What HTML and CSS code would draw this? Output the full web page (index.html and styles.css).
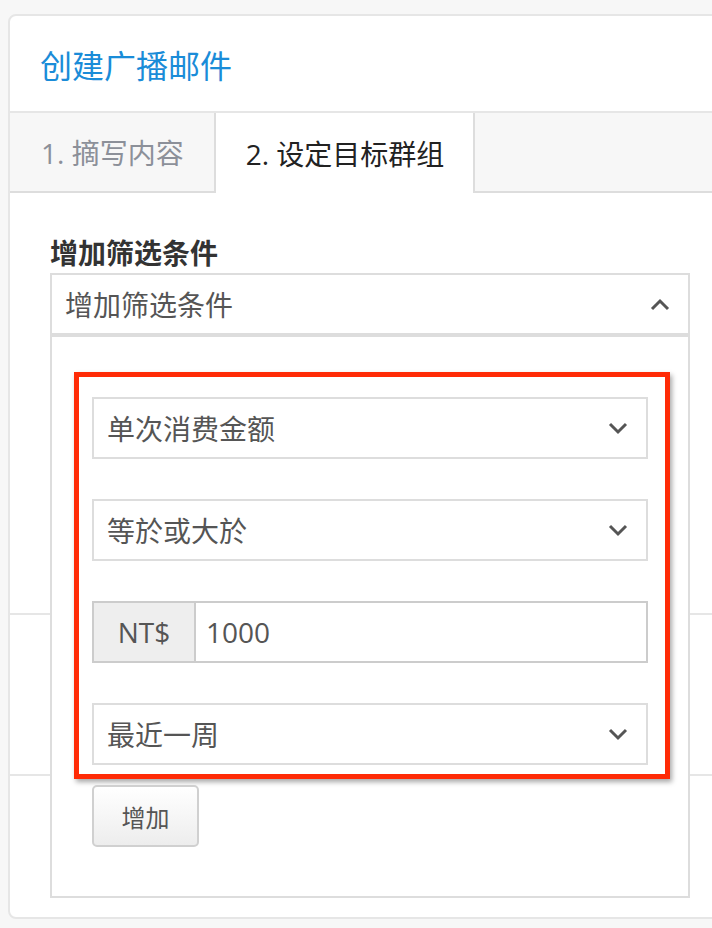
FILE: index.html
```html
<!DOCTYPE html>
<html>
<head>
  <meta charset="UTF-8">
  <link rel="stylesheet" href="styles.css">
</head>
<body>
  <div class="card">
    <div class="card-header">
      <div class="card-title">创建广播邮件</div>
    </div>

    <div class="tabs">
      <div class="tab">1. 摘写内容</div>
      <div class="tab active">2. 设定目标群组</div>
    </div>

    <div class="form-row row-filter">
      <div class="form-label">增加筛选条件</div>
      <div class="dropdown">
        <div class="dropdown-toggle">
          <span>增加筛选条件</span>
          <svg class="chevron" width="20" height="13" viewBox="0 0 20 13">
            <polyline points="2,11 10,3 18,11" fill="none" stroke="#555" stroke-width="3"/>
          </svg>
        </div>
        <div class="dropdown-menu">
          <div class="filter-box">
            <div class="select">
              <span>单次消费金额</span>
              <svg class="chevron" width="20" height="13" viewBox="0 0 20 13">
                <polyline points="2,2 10,10 18,2" fill="none" stroke="#555" stroke-width="3"/>
              </svg>
            </div>
            <div class="select">
              <span>等於或大於</span>
              <svg class="chevron" width="20" height="13" viewBox="0 0 20 13">
                <polyline points="2,2 10,10 18,2" fill="none" stroke="#555" stroke-width="3"/>
              </svg>
            </div>
            <div class="input-group">
              <span class="input-addon">NT$</span>
              <input type="text" class="input-field" value="1000">
            </div>
            <div class="select">
              <span>最近一周</span>
              <svg class="chevron" width="20" height="13" viewBox="0 0 20 13">
                <polyline points="2,2 10,10 18,2" fill="none" stroke="#555" stroke-width="3"/>
              </svg>
            </div>
          </div>
          <button class="button">增加</button>
        </div>
      </div>
    </div>

    <div class="form-row row-middle"></div>
    <div class="form-row row-last"></div>
  </div>
</body>
</html>
```

FILE: styles.css
```css
* {
  margin: 0;
  padding: 0;
  box-sizing: border-box;
}

body {
  overflow: hidden;
  font-family: 'Open Sans', 'Noto Sans CJK SC', sans-serif;
  background-color: #f7f7f7;
}

.card {
  width: 730px;
  margin: 14px 0 0 8px;
  background: white;
  border: 2px solid #e6e6e6;
  border-radius: 8px;
}

.card-header {
  display: flex;
  align-items: center;
  height: 97px;
  padding-left: 30px;
  border-bottom: 2px solid #e6e6e6;
}

.card-title {
  font-size: 32px;
  color: #1a8cd8;
}

.tabs {
  display: flex;
  height: 80px;
  background-color: #f7f7f7;
  border-bottom: 2px solid #dddddd;
}

.tab {
  display: flex;
  align-items: center;
  height: 78px;
  padding: 0 30px 0 31px;
  font-size: 28px;
  color: #8c9099;
}

.tab.active {
  height: 80px;
  padding: 0 29px 0 30px;
  margin-bottom: -2px;
  background: white;
  color: #222;
  border-left: 2px solid #dddddd;
  border-right: 2px solid #dddddd;
}

.form-row {
  padding: 0 40px;
  border-bottom: 2px solid #e6e6e6;
}

.form-row.row-filter {
  height: 422px;
  padding-top: 43px;
}

.form-row.row-middle {
  height: 161px;
}

.form-row.row-last {
  height: 141px;
  border-bottom: none;
}

.form-label {
  line-height: 34px;
  font-size: 28px;
  font-weight: bold;
  color: #333;
}

.dropdown {
  position: relative;
  width: 640px;
  margin-top: 3px;
}

.dropdown-toggle {
  display: flex;
  justify-content: space-between;
  align-items: center;
  height: 62px;
  padding: 0 18px 0 13px;
  border: 2px solid #dddddd;
  font-size: 28px;
  color: #555;
}

.dropdown-menu {
  position: absolute;
  top: 100%;
  left: 0;
  right: 0;
  z-index: 1;
  padding: 35px 18px 49px 22px;
  background: white;
  border: 2px solid #dddddd;
}

.filter-box {
  display: flex;
  flex-direction: column;
  gap: 40px;
  padding: 20px 17px 9px 13px;
  border: 5px solid #ff2b06;
  box-shadow: 2px 3px 5px rgba(0, 0, 0, 0.35);
}

.select {
  display: flex;
  justify-content: space-between;
  align-items: center;
  height: 62px;
  padding: 0 18px 0 13px;
  border: 2px solid #dddddd;
  font-size: 28px;
  color: #555;
}

.input-group {
  display: flex;
  height: 62px;
  border: 2px solid #cccccc;
}

.input-addon {
  display: flex;
  justify-content: center;
  align-items: center;
  width: 102px;
  background-color: #eeeeee;
  border-right: 2px solid #cccccc;
  font-size: 28px;
  color: #555;
}

.input-field {
  flex: 1;
  padding-left: 10px;
  border: none;
  outline: none;
  font-family: inherit;
  font-size: 28px;
  color: #555;
}

.button {
  width: 107px;
  height: 62px;
  margin: 6px 0 0 18px;
  border: 2px solid #d0d0d0;
  border-radius: 5px;
  background: linear-gradient(#ffffff, #ededed);
  font-family: inherit;
  font-size: 24px;
  color: #555;
}
```
